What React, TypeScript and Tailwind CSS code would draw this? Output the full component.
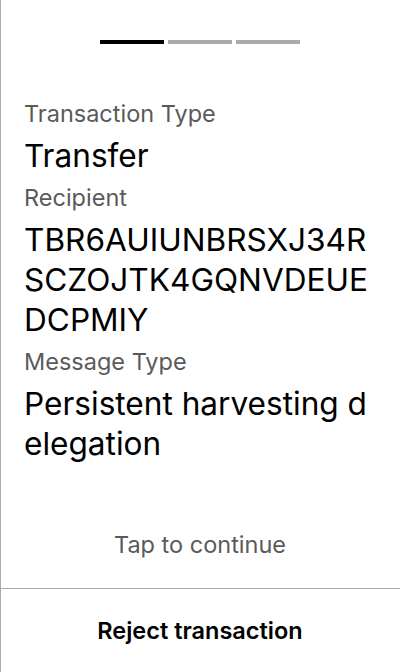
const fields = [
  { label: "Transaction Type", value: "Transfer" },
  { label: "Recipient", value: "TBR6AUIUNBRSXJ34RSCZOJTK4GQNVDEUEDCPMIY" },
  { label: "Message Type", value: "Persistent harvesting delegation" },
];

export default function App() {
  return (
    <div
      className="flex h-[672px] w-[400px] flex-col bg-white shadow-[inset_1px_0_0_#aaaaaa]"
      style={{ fontFamily: "Inter, 'Noto Sans', sans-serif" }}
    >
      {/* Step indicator */}
      <div className="flex justify-center gap-1 pt-10">
        <div className="h-1 w-16 bg-black" />
        <div className="h-1 w-16 bg-[#aaaaaa]" />
        <div className="h-1 w-16 bg-[#aaaaaa]" />
      </div>

      {/* Details */}
      <div className="mt-[56px] flex flex-col gap-2 px-6">
        {fields.map((f) => (
          <div key={f.label} className="flex flex-col gap-2">
            <p className="text-[23.5px] leading-7 text-[#5a5a5a]">{f.label}</p>
            <p className="text-[31.6px] leading-10 break-all text-black">
              {f.value}
            </p>
          </div>
        ))}
      </div>

      <div className="flex-1" />

      <p className="pb-[29px] text-center text-[23.5px] leading-7 text-[#5a5a5a]">
        Tap to continue
      </p>

      {/* Footer action */}
      <button className="h-[84px] border-t border-[#aaaaaa] text-[23.5px] font-semibold text-black">
        Reject transaction
      </button>
    </div>
  );
}
